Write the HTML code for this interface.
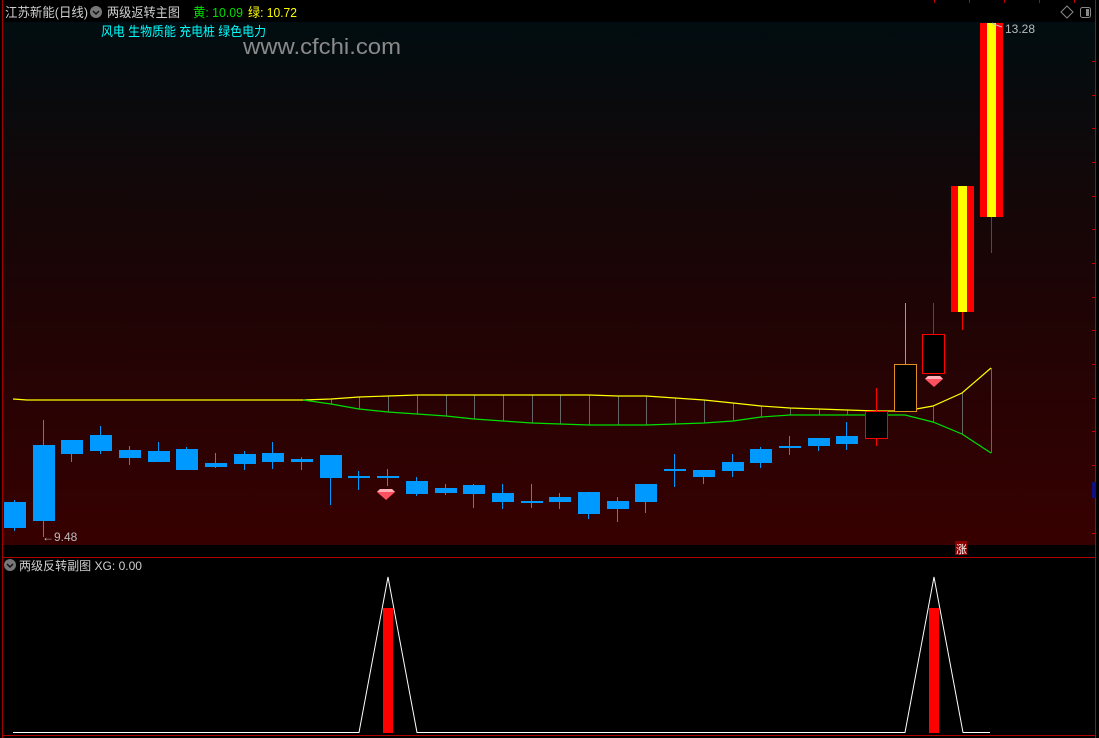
<!DOCTYPE html>
<html><head><meta charset="utf-8"><style>
body{margin:0;background:#000;width:1099px;height:738px;overflow:hidden;font-family:"Liberation Sans","Noto Sans CJK SC",sans-serif}
svg{display:block}
text{font-family:"Liberation Sans","Noto Sans CJK SC",sans-serif}
</style></head><body>
<svg width="1099" height="738" viewBox="0 0 1099 738" xmlns="http://www.w3.org/2000/svg">
<defs>
<linearGradient id="bg" x1="0" y1="0" x2="0" y2="1">
<stop offset="0" stop-color="#010d10"/><stop offset="0.45" stop-color="#1a0506"/><stop offset="1" stop-color="#370000"/>
</linearGradient>
</defs>
<rect width="1099" height="738" fill="#000"/>
<rect x="3" y="22" width="1092" height="523" fill="url(#bg)"/>
<line x1="2.5" y1="0" x2="2.5" y2="738" stroke="#a00000"/>
<line x1="1095.5" y1="0" x2="1095.5" y2="738" stroke="#c00000"/>
<line x1="3" y1="557.5" x2="1095" y2="557.5" stroke="#b00000"/>
<line x1="3" y1="735.5" x2="1095" y2="735.5" stroke="#b00000"/>
<g stroke="#c00000">
<line x1="934.5" y1="0" x2="934.5" y2="3"/><line x1="969.5" y1="0" x2="969.5" y2="3"/><line x1="1004.5" y1="0" x2="1004.5" y2="3"/><line x1="1039.5" y1="0" x2="1039.5" y2="3"/><line x1="1074.5" y1="0" x2="1074.5" y2="3"/>
<line x1="1092" y1="61.5" x2="1095" y2="61.5"/><line x1="1092" y1="95.5" x2="1095" y2="95.5"/><line x1="1092" y1="128.5" x2="1095" y2="128.5"/><line x1="1092" y1="162.5" x2="1095" y2="162.5"/><line x1="1092" y1="196.5" x2="1095" y2="196.5"/><line x1="1092" y1="229.5" x2="1095" y2="229.5"/><line x1="1092" y1="263.5" x2="1095" y2="263.5"/><line x1="1092" y1="297.5" x2="1095" y2="297.5"/><line x1="1092" y1="330.5" x2="1095" y2="330.5"/><line x1="1092" y1="364.5" x2="1095" y2="364.5"/><line x1="1092" y1="398.5" x2="1095" y2="398.5"/><line x1="1092" y1="431.5" x2="1095" y2="431.5"/><line x1="1092" y1="465.5" x2="1095" y2="465.5"/><line x1="1092" y1="533.5" x2="1095" y2="533.5"/>
</g>
<rect x="1092" y="482" width="4" height="16" fill="#101080"/>

<text x="5" y="17" font-size="13" fill="#cfcfcf" textLength="83" lengthAdjust="spacingAndGlyphs">江苏新能(日线)</text>
<circle cx="96" cy="12" r="6" fill="#777"/><path d="M93 11 L96 14 L99 11" stroke="#111" stroke-width="1.5" fill="none"/>
<text x="107" y="17" font-size="13" fill="#cfcfcf" textLength="73" lengthAdjust="spacingAndGlyphs">两级返转主图</text>
<text x="193" y="17" font-size="13" fill="#00e000" textLength="50" lengthAdjust="spacingAndGlyphs">黄: 10.09</text>
<text x="248" y="17" font-size="13" fill="#ffff00" textLength="49" lengthAdjust="spacingAndGlyphs">绿: 10.72</text>
<text x="101" y="36" font-size="13" fill="#00ffff" textLength="165" lengthAdjust="spacingAndGlyphs">风电 生物质能 充电桩 绿色电力</text>
<text x="243" y="54" font-size="22" fill="#8a8a8a" textLength="158" lengthAdjust="spacingAndGlyphs">www.cfchi.com</text>
<path d="M1067 6 L1073 12 L1067 18 L1061 12 Z" stroke="#888" fill="none"/>
<rect x="1080.5" y="7.5" width="10" height="10" rx="2" stroke="#888" fill="none"/><rect x="1086" y="9" width="3" height="7" fill="#888"/>

<g stroke="#666" stroke-width="1">
<line x1="331.5" y1="399" x2="331.5" y2="404"/><line x1="359.5" y1="397" x2="359.5" y2="409"/><line x1="388.5" y1="396" x2="388.5" y2="412"/><line x1="417.5" y1="395" x2="417.5" y2="414"/><line x1="446.5" y1="395" x2="446.5" y2="416"/><line x1="474.5" y1="395" x2="474.5" y2="419"/><line x1="503.5" y1="395" x2="503.5" y2="421"/><line x1="532.5" y1="395" x2="532.5" y2="423"/><line x1="560.5" y1="395" x2="560.5" y2="424"/><line x1="589.5" y1="395" x2="589.5" y2="425"/><line x1="618.5" y1="396" x2="618.5" y2="425"/><line x1="646.5" y1="396" x2="646.5" y2="425"/><line x1="675.5" y1="398" x2="675.5" y2="424"/><line x1="704.5" y1="400" x2="704.5" y2="423"/><line x1="733.5" y1="403" x2="733.5" y2="421"/><line x1="761.5" y1="406" x2="761.5" y2="417"/><line x1="790.5" y1="408" x2="790.5" y2="415"/><line x1="819.5" y1="409" x2="819.5" y2="415"/><line x1="847.5" y1="410" x2="847.5" y2="415"/><line x1="933.5" y1="406" x2="933.5" y2="422"/><line x1="962.5" y1="393" x2="962.5" y2="434"/><line x1="991.5" y1="368" x2="991.5" y2="453"/>
</g>
<polyline fill="none" stroke="#ffff00" stroke-width="1.2" points="13,399 27,400 303,400 331,399 359,397 388,396 417,395 446,395 532,395 589,395 618,396 646,396 675,398 704,400 733,403 761,406 790,408 819,409 847,410 876,411 905,411 933,406 962,393 991,368"/>
<polyline fill="none" stroke="#00e000" stroke-width="1.2" points="303,400 331,404 359,409 388,412 417,414 446,416 474,419 503,421 532,423 560,424 589,425 646,425 675,424 704,423 733,421 761,417 790,415 876,415 905,415 933,422 962,434 991,453"/>

<g fill="#0099ff">
<rect x="14" y="500" width="1" height="31"/><rect x="4" y="502" width="22" height="26"/>
<rect x="43" y="420" width="1" height="117"/><rect x="33" y="445" width="22" height="76"/>
<rect x="71" y="440" width="1" height="22"/><rect x="61" y="440" width="22" height="14"/>
<rect x="100" y="426" width="1" height="28"/><rect x="90" y="435" width="22" height="16"/>
<rect x="129" y="446" width="1" height="19"/><rect x="119" y="450" width="22" height="8"/>
<rect x="158" y="442" width="1" height="20"/><rect x="148" y="451" width="22" height="11"/>
<rect x="186" y="447" width="1" height="23"/><rect x="176" y="449" width="22" height="21"/>
<rect x="215" y="453" width="1" height="15"/><rect x="205" y="463" width="22" height="4"/>
<rect x="244" y="451" width="1" height="19"/><rect x="234" y="454" width="22" height="10"/>
<rect x="272" y="442" width="1" height="27"/><rect x="262" y="453" width="22" height="9"/>
<rect x="301" y="457" width="1" height="13"/><rect x="291" y="459" width="22" height="3"/>
<rect x="330" y="455" width="1" height="50"/><rect x="320" y="455" width="22" height="23"/>
<rect x="358" y="471" width="1" height="19"/><rect x="348" y="476" width="22" height="2"/>
<rect x="387" y="469" width="1" height="17"/><rect x="377" y="476" width="22" height="2"/>
<rect x="416" y="477" width="1" height="19"/><rect x="406" y="481" width="22" height="13"/>
<rect x="445" y="484" width="1" height="11"/><rect x="435" y="488" width="22" height="5"/>
<rect x="473" y="484" width="1" height="24"/><rect x="463" y="485" width="22" height="9"/>
<rect x="502" y="484" width="1" height="25"/><rect x="492" y="493" width="22" height="9"/>
<rect x="531" y="484" width="1" height="24"/><rect x="521" y="501" width="22" height="2"/>
<rect x="559" y="493" width="1" height="16"/><rect x="549" y="497" width="22" height="5"/>
<rect x="588" y="492" width="1" height="27"/><rect x="578" y="492" width="22" height="22"/>
<rect x="617" y="497" width="1" height="25"/><rect x="607" y="501" width="22" height="8"/>
<rect x="645" y="484" width="1" height="29"/><rect x="635" y="484" width="22" height="18"/>
<rect x="674" y="454" width="1" height="33"/><rect x="664" y="469" width="22" height="2"/>
<rect x="703" y="470" width="1" height="14"/><rect x="693" y="470" width="22" height="7"/>
<rect x="732" y="454" width="1" height="23"/><rect x="722" y="462" width="22" height="9"/>
<rect x="760" y="447" width="1" height="21"/><rect x="750" y="449" width="22" height="14"/>
<rect x="789" y="436" width="1" height="19"/><rect x="779" y="446" width="22" height="2"/>
<rect x="818" y="438" width="1" height="13"/><rect x="808" y="438" width="22" height="8"/>
<rect x="846" y="422" width="1" height="28"/><rect x="836" y="436" width="22" height="8"/>
</g>
<line x1="876.5" y1="388" x2="876.5" y2="446" stroke="#ff0000"/>
<rect x="865.5" y="411.5" width="22" height="27" fill="#000" stroke="#ff0000"/>
<line x1="905.5" y1="303" x2="905.5" y2="364" stroke="#e09020"/>
<rect x="894.5" y="364.5" width="22" height="47" fill="#000" stroke="#e09020"/>
<line x1="933.5" y1="303" x2="933.5" y2="334" stroke="#ff0000"/>
<rect x="922.5" y="334.5" width="22" height="39" fill="#000" stroke="#ff0000"/>
<line x1="962.5" y1="312" x2="962.5" y2="330" stroke="#ff0000"/>
<rect x="951" y="186" width="23" height="126" fill="#ff0000"/><rect x="958" y="186" width="9" height="126" fill="#ffff00"/>
<line x1="991.5" y1="217" x2="991.5" y2="253" stroke="#ff0000"/>
<rect x="980" y="23" width="23" height="194" fill="#ff0000"/><rect x="987" y="23" width="9" height="194" fill="#ffff00"/>

<g>
<path d="M380 489 L392 489 L395 492 L386 500 L377 492 Z" fill="#ff5060"/><path d="M380 489 L392 489 L395 492 L377 492 Z" fill="#ffb0b8"/>
<path d="M928 376 L940 376 L943 379 L934 387 L925 379 Z" fill="#ff5060"/><path d="M928 376 L940 376 L943 379 L925 379 Z" fill="#ffb0b8"/>
</g>
<text x="42" y="541" font-size="12" fill="#bbb">←9.48</text>
<text x="1005" y="33" font-size="12" fill="#bbb">13.28</text>
<path d="M992 23 L996 25 L1002 27" stroke="#bbb" fill="none"/>
<rect x="955" y="541" width="12" height="14" fill="#8a0000"/>
<text x="956" y="553" font-size="11" fill="#fff">涨</text>

<circle cx="10" cy="565" r="6" fill="#777"/><path d="M7 564 L10 567 L13 564" stroke="#111" stroke-width="1.5" fill="none"/>
<text x="19" y="570" font-size="12" fill="#cfcfcf" textLength="123" lengthAdjust="spacingAndGlyphs">两级反转副图 XG: 0.00</text>
<rect x="383" y="608" width="10" height="125" fill="#ff0000"/>
<rect x="929" y="608" width="10" height="125" fill="#ff0000"/>
<polyline fill="none" stroke="#fff" stroke-width="1" points="13,732.5 359,732.5 388,577 417,732.5 905,732.5 934,577 963,732.5 990,732.5"/>
</svg>
</body></html>
